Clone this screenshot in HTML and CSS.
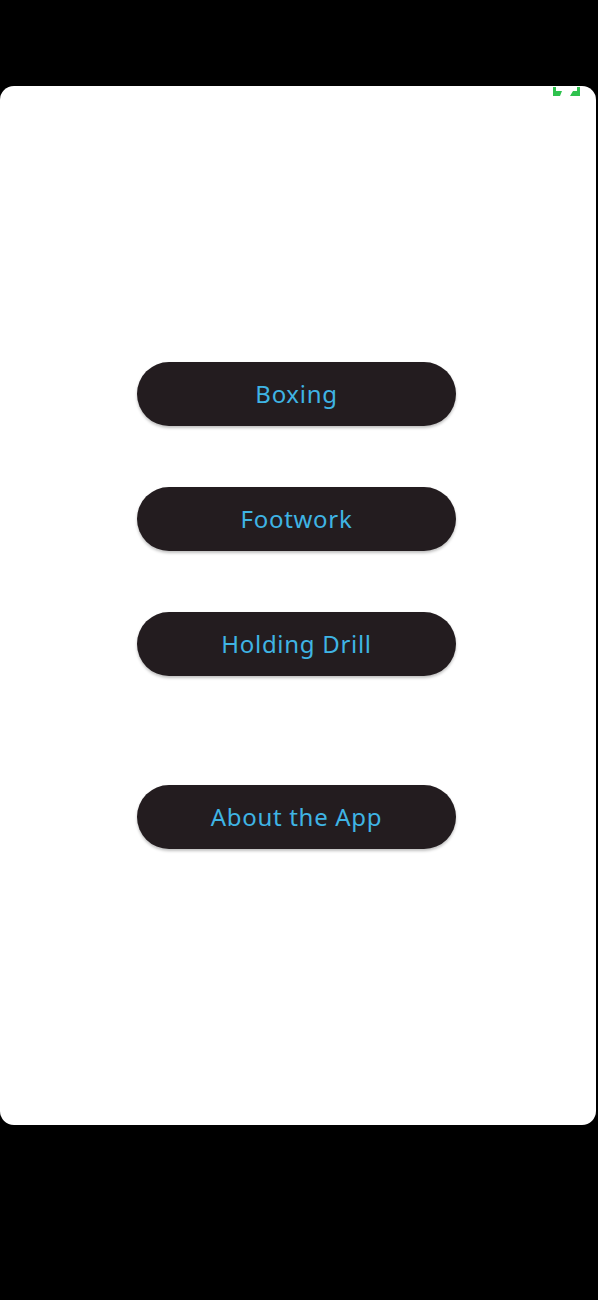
FILE: index.html
```html
<!DOCTYPE html>
<html lang="en">
<head>
    <meta charset="UTF-8">
    <meta name="viewport" content="width=device-width, initial-scale=1.0">
    <title>Boxing Trainer</title>
    <link rel="stylesheet" href="styles.css">
</head>
<body>
    <div class="screen">
        <div class="status-bits">
            <svg class="status-icon" width="30" height="10" viewBox="0 0 30 10">
                <path d="M1 0 L4 0 L4 4 L10 4 L8 9 L1 9 Z" fill="#2fc24e"/>
                <path d="M18 9 L21 4 L25 4 L25 0 L28 0 L28 9 Z" fill="#2fc24e"/>
            </svg>
        </div>
        <div class="menu">
            <button class="menu-btn">Boxing</button>
            <button class="menu-btn">Footwork</button>
            <button class="menu-btn">Holding Drill</button>
            <button class="menu-btn about">About the App</button>
        </div>
    </div>
</body>
</html>
```

FILE: styles.css
```css
body {
    margin: 0;
    background: #000;
    font-family: 'Noto Sans', 'Open Sans', sans-serif;
    height: 1300px;
}

.screen {
    position: relative;
    margin-top: 86px;
    width: 596px;
    height: 1039px;
    background: #fff;
    border-radius: 14px;
}

.status-bits {
    position: absolute;
    top: 1px;
    left: 552px;
}

.status-icon {
    display: block;
}

.menu {
    display: flex;
    flex-direction: column;
    align-items: flex-start;
    padding-top: 276px;
    padding-left: 137px;
    gap: 61px;
}

.menu-btn {
    width: 319px;
    height: 64px;
    padding: 0 0 2px;
    border: none;
    border-radius: 32px;
    background: #231c1f;
    color: #3fb4e4;
    font-family: inherit;
    font-size: 24px;
    letter-spacing: 0.7px;
    box-shadow: 0 2px 3px rgba(0,0,0,0.25);
    cursor: pointer;
}

.menu-btn.about {
    margin-top: 48px;
}
```
